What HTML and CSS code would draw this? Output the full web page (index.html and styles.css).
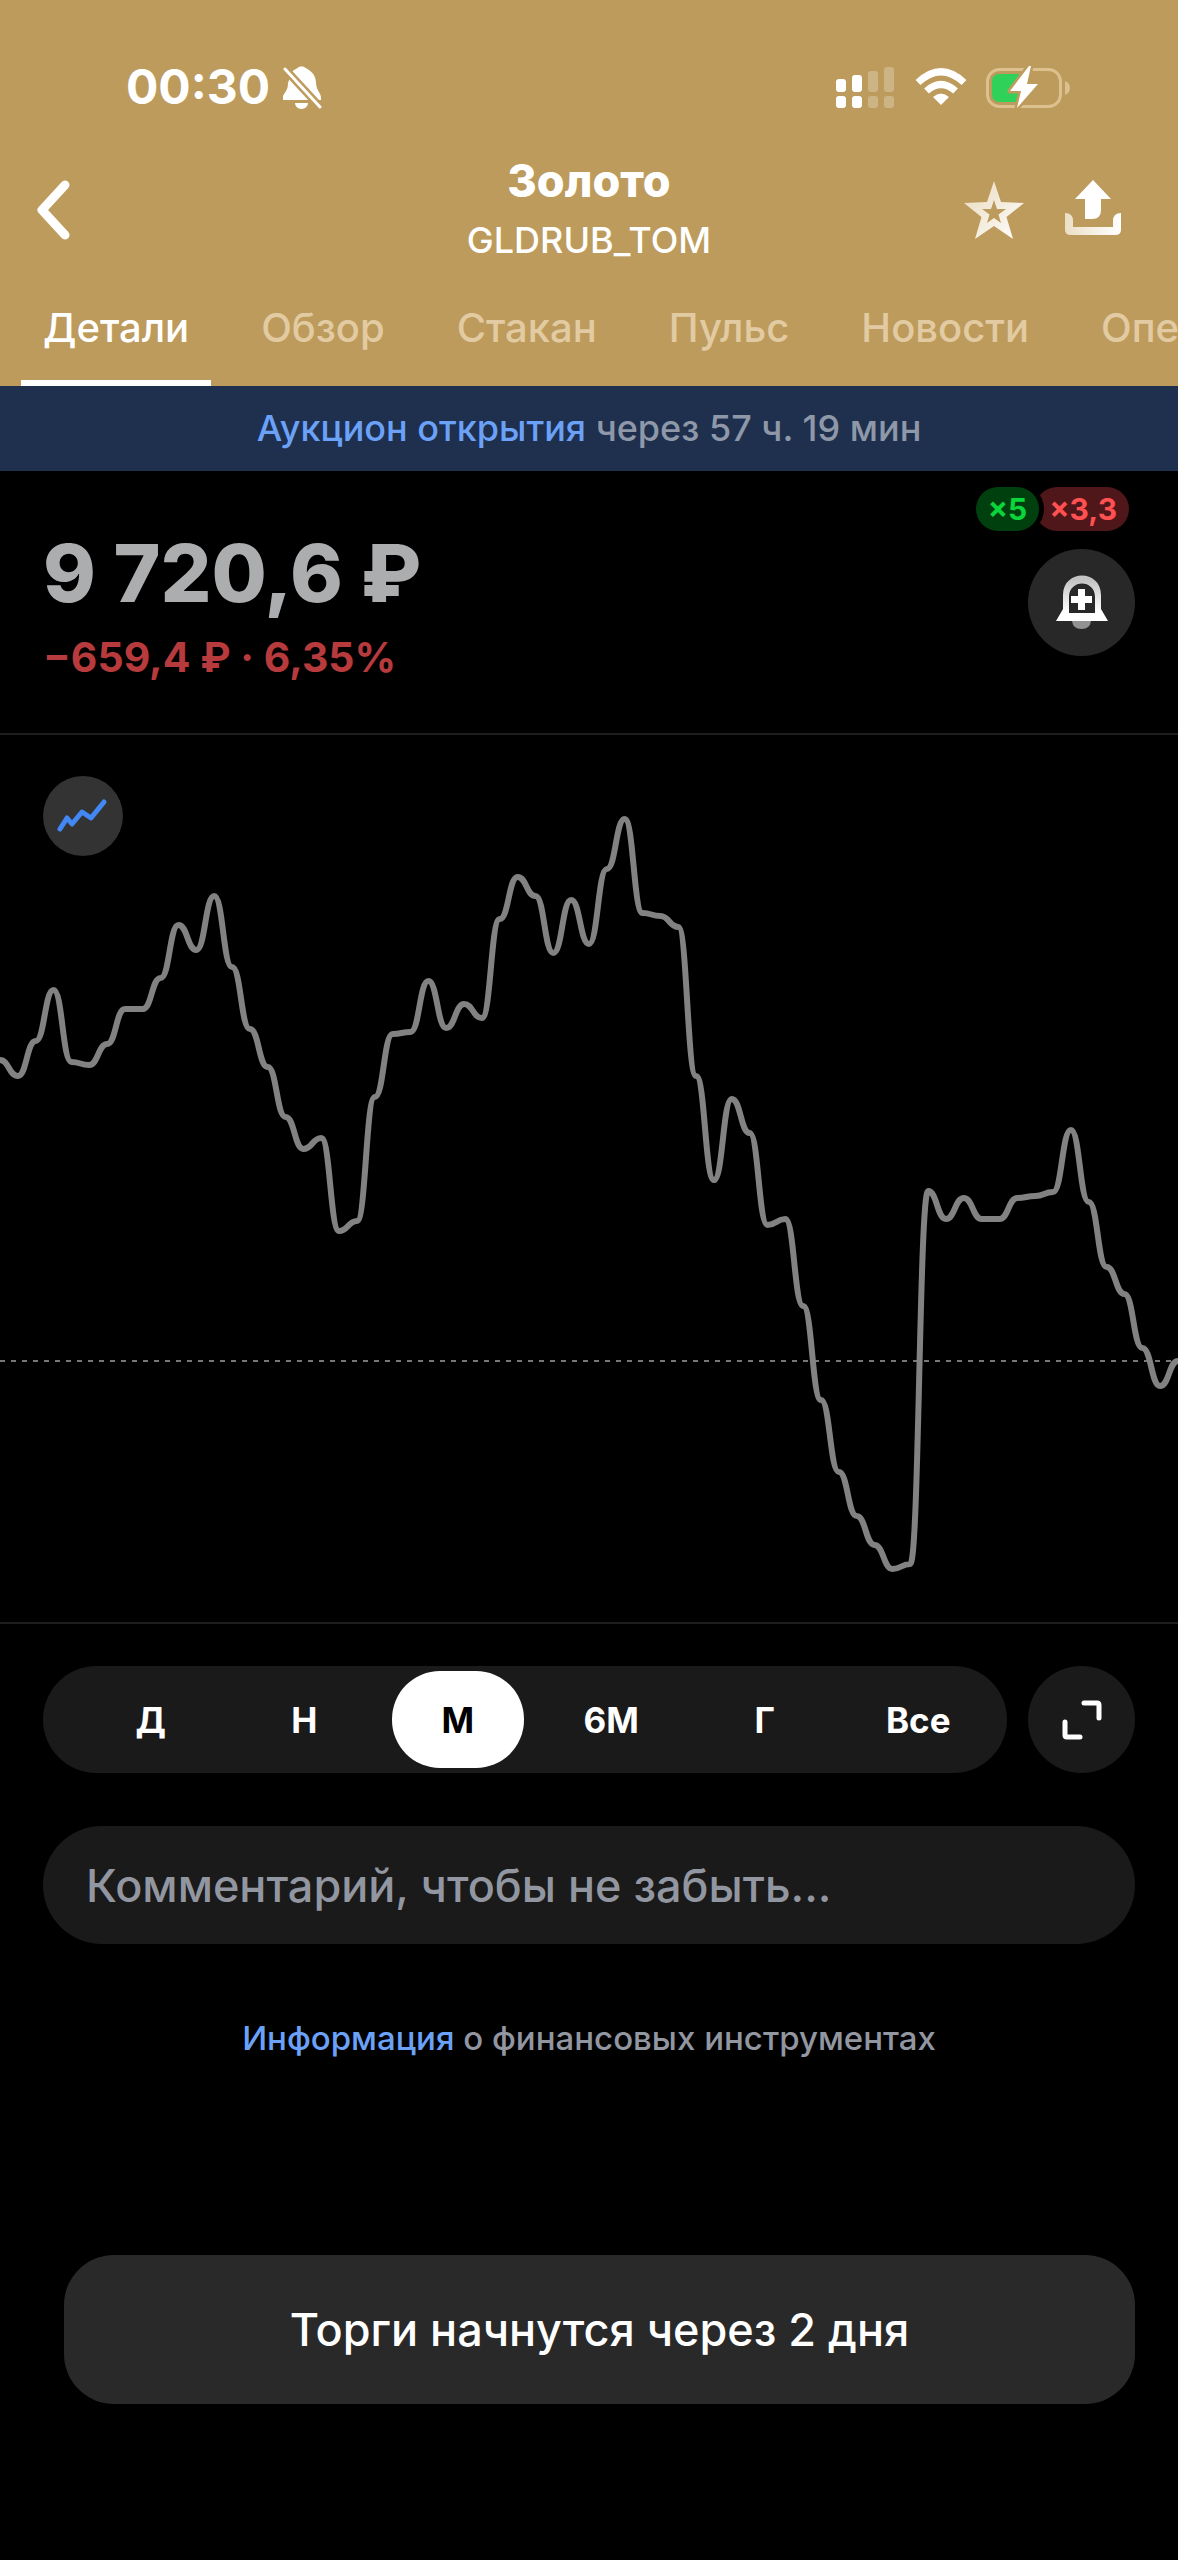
FILE: index.html
```html
<!DOCTYPE html>
<html lang="ru">
<head>
<meta charset="utf-8">
<meta name="viewport" content="width=device-width, initial-scale=1">
<title>Золото — GLDRUB_TOM</title>
<link rel="stylesheet" href="styles.css">
</head>
<body>
<header class="header">
  <div class="status">
    <div class="status-left">
      <time class="clock">00:30</time>
      <svg class="icon" width="40" height="44" viewBox="0 0 40 44" aria-hidden="true">
        <path fill="#fff" d="M10 7C12 4 15 4 16 2.500C17 1 22 1 23 2.500C24 4 33 6 34 17C34 26 39 27 39 33V35H1V32C1 28 6 27 6 18ZM13 38H26C26 41 23 44 19.500 44S13 41 13 38Z"/>
        <path stroke="#bd9b5c" stroke-width="8" d="M2 3L39 43"/>
        <path stroke="#fff" stroke-width="3" stroke-linecap="round" d="M3 4L38 42"/>
      </svg>
    </div>
    <svg class="icon" width="236" height="44" viewBox="0 0 236 44" aria-hidden="true">
      <g fill="#fff">
        <rect x="0" y="14" width="10" height="13" rx="3"/><rect x="0" y="31" width="10" height="12" rx="3"/>
        <rect x="16" y="10" width="10" height="17" rx="3"/><rect x="16" y="31" width="10" height="12" rx="3"/>
        <g opacity=".25">
          <rect x="32" y="6" width="10" height="21" rx="3"/><rect x="32" y="31" width="10" height="12" rx="3"/>
          <rect x="48" y="2" width="10" height="25" rx="3"/><rect x="48" y="31" width="10" height="12" rx="3"/>
        </g>
        <path d="M105 40L97 32Q105 25 113 32Z"/>
      </g>
      <g fill="none" stroke="#fff" stroke-width="7">
        <path d="M82 17.500Q105-4 128 17.500"/>
        <path d="M90.500 26Q105 13 119.500 26"/>
      </g>
      <rect x="151.500" y="4.500" width="73" height="37" rx="12" fill="none" stroke="#dcc08d" stroke-width="3"/>
      <path d="M229 16Q234 18 234 23T229 30Z" fill="#dcc08d"/>
      <rect x="156" y="9" width="32" height="28" rx="7" fill="#30d158"/>
      <path d="M193 1L174 26H185L181 43L202 19H191L195 1Z" fill="#fff" stroke="#bd9b5c" stroke-width="5" paint-order="stroke" stroke-linejoin="round"/>
    </svg>
  </div>

  <div class="titlebar">
    <button class="icon-button" type="button" aria-label="Назад">
      <svg class="icon" width="36" height="60" viewBox="0 0 36 60"><path d="M31 5L8 30L31 55" fill="none" stroke="#fff" stroke-width="9" stroke-linecap="round" stroke-linejoin="round"/></svg>
    </button>
    <div class="heading">
      <h1 class="title">Золото</h1>
      <p class="ticker">GLDRUB_TOM</p>
    </div>
    <div class="actions">
      <button class="icon-button" type="button" aria-label="В избранное">
        <svg class="icon" width="62" height="60" viewBox="0 0 62 60">
          <defs><linearGradient id="star" x2="1" y2="1"><stop stop-color="#e8d9bb"/><stop offset="1" stop-color="#fff"/></linearGradient></defs>
          <path d="M31 1L38 22L61 23L43.500 37L50 59L31 46L12 59L18.500 37L1 23L24 22ZM31 20L28 29H19L26.500 34.500L24 43L31 38L38 43L35.500 34.500L43 29H34Z" fill="url(#star)" fill-rule="evenodd"/>
        </svg>
      </button>
      <button class="icon-button" type="button" aria-label="Поделиться">
        <svg class="icon" width="56" height="60" viewBox="0 0 56 60">
          <defs><linearGradient id="tray" x2="1"><stop stop-color="#ecdfc6"/><stop offset="1" stop-color="#fff"/></linearGradient></defs>
          <path d="M28 0L46 19H36V30Q36 39 27 39H20V19H10Z" fill="#fff"/>
          <path d="M0 33Q8 33 8 41V47H48V41Q48 33 56 33V50Q56 55 50 55H6Q0 55 0 50Z" fill="url(#tray)"/>
        </svg>
      </button>
    </div>
  </div>

  <nav class="tabs" aria-label="Разделы">
    <a class="tab tab-active" href="#details" aria-current="page">Детали</a>
    <a class="tab" href="#overview">Обзор</a>
    <a class="tab" href="#book">Стакан</a>
    <a class="tab" href="#pulse">Пульс</a>
    <a class="tab" href="#news">Новости</a>
    <a class="tab" href="#operations">Операции</a>
  </nav>
</header>

<main id="details">
  <p class="notice"><a class="link" href="#auction">Аукцион открытия</a> через 57 ч. 19 мин</p>

  <section class="quote">
    <div class="quote-values">
      <p class="price">9 720,6 ₽</p>
      <p class="change">−659,4 ₽ · 6,35%</p>
    </div>
    <div class="quote-side">
      <div class="leverage">
        <span class="badge badge-long">×5</span>
        <span class="badge badge-short">×3,3</span>
      </div>
      <button class="round-button round-light" type="button" aria-label="Добавить уведомление">
        <svg class="icon" width="107" height="107" viewBox="0 0 107 107">
          <defs><linearGradient id="bell" x2="0" y2="1"><stop offset=".1" stop-color="#c4c4c4"/><stop offset=".8" stop-color="#fff"/></linearGradient></defs>
          <path d="M44 72H63Q62 80 53.500 80T44 72Z" fill="#929292"/>
          <path d="M28 72L35 60V46C35 20 73 20 73 46V60L80 72ZM41 64H67V48C67 30 41 30 41 48Z" fill="url(#bell)" fill-rule="evenodd"/>
          <path d="M53.500 40V61M43 50.500H64" stroke="#fff" stroke-width="7"/>
        </svg>
      </button>
    </div>
  </section>

  <section class="chart" aria-label="График цены за месяц">
    <button class="chart-type" type="button" aria-label="Тип графика">
      <svg class="icon" width="80" height="80" viewBox="0 0 80 80"><path d="M17 53L24 42L29 48L39 36L48 42L61 26" fill="none" stroke="#4387f5" stroke-width="5" stroke-linecap="round" stroke-linejoin="round"/></svg>
    </button>
    <svg class="plot" viewBox="0 0 66 887" preserveAspectRatio="none" aria-hidden="true">
      <path class="plot-level" d="M0 626H66"/>
      <path class="plot-line" d="M0 325C.5 325 .5 341 1 341S1.500 306 2 306 2.500 255 3 255 3.500 327 4 327 4.500 330 5 330 5.500 309 6 309 6.500 274 7 274 7.500 274 8 274 8.500 243 9 243 9.500 190 10 190 10.500 215 11 215 11.500 161 12 161 12.500 232 13 232 13.500 294 14 294 14.500 332 15 332 15.500 382 16 382 16.500 414 17 414 17.500 403 18 403 18.500 496 19 496 19.500 486 20 486 20.500 362 21 362 21.500 299 22 299 22.500 297 23 297 23.500 246 24 246 24.500 293 25 293 25.500 269 26 269 26.500 283 27 283 27.500 184 28 184 28.500 142 29 142 29.500 161 30 161 30.500 218 31 218 31.500 165 32 165 32.500 209 33 209 33.500 134 34 134 34.500 84 35 84 35.500 178 36 178 36.500 181 37 181 37.500 192 38 192 38.500 341 39 341 39.500 445 40 445 40.500 364 41 364 41.500 398 42 398 42.500 490 43 490 43.500 484 44 484 44.500 571 45 571 45.500 665 46 665 46.500 737 47 737 47.500 781 48 781 48.500 810 49 810 49.500 834 50 834 50.500 829 51 829 51.500 456 52 456 52.500 484 53 484 53.500 463 54 463 54.500 484 55 484 55.500 484 56 484 56.500 463 57 463 57.500 461 58 461 58.500 457 59 457 59.500 395 60 395 60.500 467 61 467 61.500 532 62 532 62.500 559 63 559 63.500 613 64 613 64.500 651 65 651 65.500 626 66 626"/>
    </svg>
  </section>

  <div class="controls">
    <div class="periods" role="group" aria-label="Период">
      <button class="period" type="button">Д</button>
      <button class="period" type="button">Н</button>
      <button class="period period-active" type="button" aria-pressed="true">М</button>
      <button class="period" type="button">6М</button>
      <button class="period" type="button">Г</button>
      <button class="period" type="button">Все</button>
    </div>
    <button class="round-button" type="button" aria-label="На весь экран">
      <svg class="icon" width="40" height="40" viewBox="0 0 40 40"><path d="M22 3H35Q37 3 37 5V18M3 22V35Q3 37 5 37H18" fill="none" stroke="#fff" stroke-width="5" stroke-linecap="round"/></svg>
    </button>
  </div>

  <input class="comment" type="text" aria-label="Комментарий" placeholder="Комментарий, чтобы не забыть...">

  <p class="info"><a class="link" href="#info">Информация</a> о финансовых инструментах</p>

  <button class="trade" type="button">Торги начнутся через 2 дня</button>
</main>
</body>
</html>
```

FILE: styles.css
```css
* { box-sizing: border-box; }

body {
  margin: 0;
  min-height: 100vh;
  background: #000;
  color: #fff;
  font-family: Inter, "Liberation Sans", sans-serif;
}

h1, p { margin: 0; }
a { color: inherit; text-decoration: none; }
button, input { border: 0; margin: 0; padding: 0; font: inherit; color: inherit; background: none; }
.icon { display: block; }

/* Header */
.header { background: #bd9b5c; padding-top: 57px; }

.status {
  display: flex;
  align-items: center;
  justify-content: space-between;
  height: 60px;
  padding: 0 106px 0 126px;
}
.status-left { display: flex; align-items: center; gap: 12px; }
.clock { font-size: 48px; font-weight: 700; line-height: 60px; }

.titlebar {
  display: grid;
  grid-template-columns: 1fr auto 1fr;
  align-items: center;
  height: 155px;
  padding: 30px 34px 0;
}
.icon-button { justify-self: start; }
.heading { text-align: center; }
.title { font-size: 45px; font-weight: 800; line-height: 60px; }
.ticker { font-size: 36px; font-weight: 500; line-height: 58px; }
.actions { display: flex; justify-content: flex-end; gap: 40px; padding-right: 23px; }

.tabs { display: flex; gap: 28px; padding-left: 21px; overflow: hidden; }
.tab {
  flex: none;
  padding: 28px 22px 24px;
  border-bottom: 6px solid transparent;
  color: #e2cba2;
  font-size: 40px;
  font-weight: 500;
  line-height: 56px;
}
.tab-active { color: #fff; border-bottom-color: #fff; }

/* Session notice */
.notice {
  padding: 14px 0;
  background: #1e304e;
  color: #8e98a8;
  font-size: 36px;
  font-weight: 500;
  line-height: 57px;
  text-align: center;
}
.link { color: #6ba2f8; }

/* Quote */
.quote {
  display: flex;
  justify-content: space-between;
  padding: 16px 43px 0;
  border-bottom: 2px solid #1e1e1e;
}
.quote-values { padding: 38px 0 48px; }
.price { color: #acadaf; font-size: 80px; font-weight: 800; line-height: 96px; }
.change { color: #b73a3c; font-size: 41px; font-weight: 700; line-height: 56px; padding-top: 8px; }
.quote-side { display: flex; flex-direction: column; align-items: flex-end; gap: 18px; }
.leverage { display: flex; padding-right: 6px; }
.badge {
  height: 44px;
  padding: 0 12px;
  border-radius: 22px;
  font-size: 30px;
  font-weight: 700;
  line-height: 44px;
}
.badge-long { z-index: 1; background: #00400f; color: #0ad63c; box-shadow: 0 0 0 5px #000; }
.badge-short { margin-left: -4px; padding-left: 14px; background: #4f1719; color: #ff5052; }

.round-button {
  display: grid;
  place-items: center;
  flex: none;
  width: 107px;
  height: 107px;
  border-radius: 50%;
  background: #1a1a1a;
}
.round-light { background: #282828; }

/* Chart */
.chart { position: relative; border-bottom: 2px solid #1e1e1e; }
.chart-type {
  position: absolute;
  top: 41px;
  left: 43px;
  border-radius: 50%;
  background: #333;
}
.plot { display: block; width: 100%; height: 887px; }
.plot path { fill: none; vector-effect: non-scaling-stroke; }
.plot-line { stroke: #828282; stroke-width: 6px; stroke-linejoin: round; }
.plot-level { stroke: #777; stroke-width: 2px; stroke-dasharray: 5 6; }

/* Period switch */
.controls { display: flex; gap: 21px; padding: 42px 43px 53px; }
.periods {
  display: grid;
  grid-template-columns: repeat(6, 1fr);
  justify-items: center;
  align-items: center;
  flex: 1;
  height: 107px;
  padding: 0 12px 0 31px;
  border-radius: 54px;
  background: #1a1a1a;
}
.period {
  width: 132px;
  height: 97px;
  border-radius: 48px;
  font-size: 35px;
  font-weight: 700;
}
.period-active { background: #fff; color: #000; }

/* Comment and footer */
.comment {
  display: block;
  width: calc(100% - 86px);
  height: 118px;
  margin: 0 43px;
  padding: 0 43px;
  border-radius: 59px;
  background: #1a1a1a;
  font-size: 45px;
  font-weight: 500;
}
.comment::placeholder { color: #9296a0; opacity: 1; }

.info {
  padding: 70px 43px 193px;
  color: #9296a0;
  font-size: 33px;
  font-weight: 500;
  line-height: 48px;
  text-align: center;
}

.trade {
  display: block;
  width: calc(100% - 107px);
  height: 149px;
  margin: 0 43px 0 64px;
  border-radius: 50px;
  background: #292929;
  font-size: 45px;
  font-weight: 500;
}
```
